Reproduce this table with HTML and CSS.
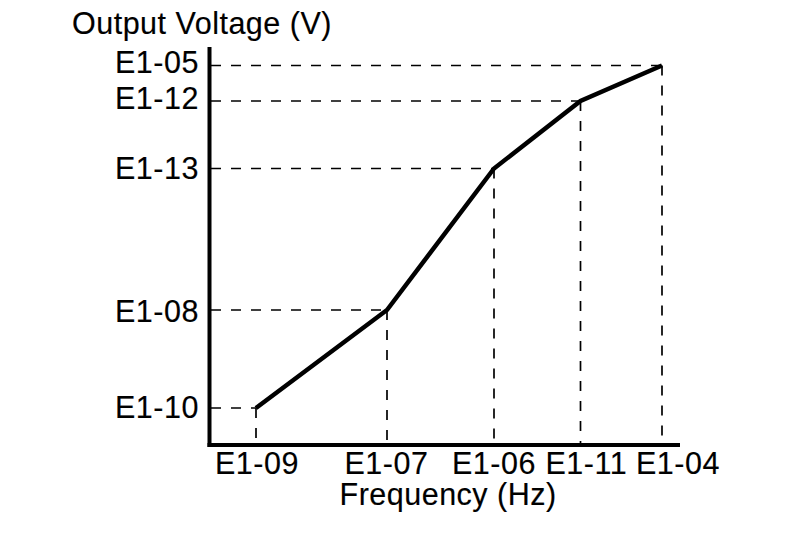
FILE: index.html
```html
<!DOCTYPE html>
<html>
<head>
<meta charset="utf-8">
<title>V/f pattern</title>
<link rel="stylesheet" href="styles.css">
</head>
<body>
<svg class="chart" viewBox="0 0 800 541" width="800" height="541" xmlns="http://www.w3.org/2000/svg">
  <g class="dash">
    <line x1="211" y1="65.5" x2="662" y2="65.5"/>
    <line x1="211" y1="101" x2="580.5" y2="101"/>
    <line x1="211" y1="168.5" x2="494" y2="168.5"/>
    <line x1="211" y1="310" x2="387" y2="310"/>
    <line x1="211" y1="408" x2="256" y2="408"/>
    <line x1="256" y1="408" x2="256" y2="443"/>
    <line x1="387" y1="310" x2="387" y2="443"/>
    <line x1="494" y1="168.5" x2="494" y2="443"/>
    <line x1="580.5" y1="101" x2="580.5" y2="443"/>
    <line x1="662" y1="65.5" x2="662" y2="443"/>
  </g>
  <g class="axis">
    <line x1="209.5" y1="47" x2="209.5" y2="447"/>
    <line x1="207.5" y1="445" x2="680" y2="445"/>
  </g>
  <polyline class="curve" points="256,408 387,310 494,168.5 580.5,101 662,65.5"/>
  <g class="label">
    <text x="72" y="34">Output Voltage (V)</text>
    <text x="115" y="73">E1-05</text>
    <text x="115" y="108.5">E1-12</text>
    <text x="115" y="179">E1-13</text>
    <text x="115" y="322">E1-08</text>
    <text x="115" y="417.5">E1-10</text>
    <text x="215" y="474">E1-09</text>
    <text x="344.5" y="474">E1-07</text>
    <text x="452" y="474">E1-06</text>
    <text x="545.5" y="474">E1-11</text>
    <text x="636" y="474">E1-04</text>
    <text x="339.5" y="505">Frequency (Hz)</text>
  </g>
</svg>
</body>
</html>
```
FILE: styles.css
```css
html, body {
  margin: 0;
  padding: 0;
  background: #ffffff;
}
.chart {
  display: block;
}
.dash line {
  stroke: #000;
  stroke-width: 1.7;
  stroke-dasharray: 10 10;
  fill: none;
}
.axis line {
  stroke: #000;
  stroke-width: 4;
}
.curve {
  fill: none;
  stroke: #000;
  stroke-width: 4.5;
  stroke-linejoin: miter;
}
.label text {
  font-family: "Liberation Sans", Arial, sans-serif;
  font-size: 30.5px;
  letter-spacing: 0.5px;
  fill: #000;
  stroke: #000;
  stroke-width: 0.15px;
}
```
